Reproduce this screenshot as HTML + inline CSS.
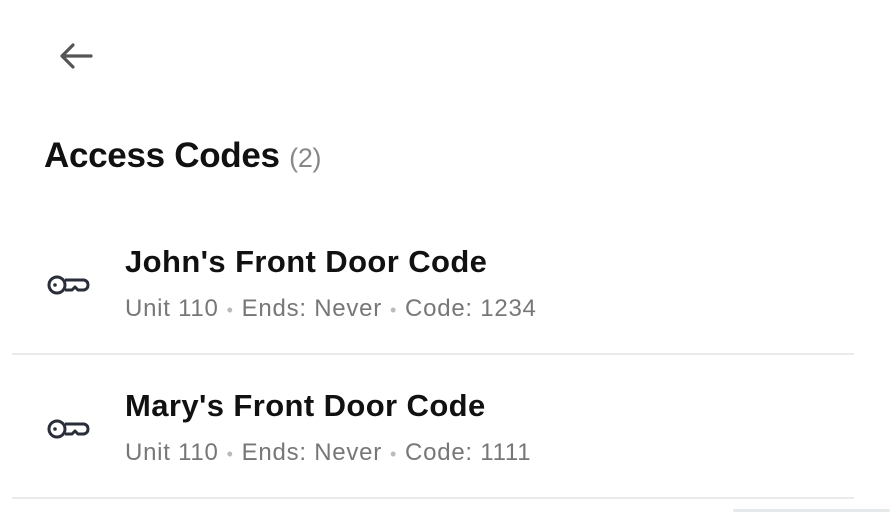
<!DOCTYPE html>
<html><head><style>
body{margin:0;width:890px;height:512px;background:#fff;font-family:"Liberation Sans",sans-serif;position:relative;overflow:hidden}
.a{position:absolute;white-space:nowrap}
.t{font-size:35px;font-weight:bold;color:#111;left:44px;top:136px;letter-spacing:-0.3px}
.t span{font-weight:normal;color:#888;font-size:27px}
.n{font-size:31px;font-weight:bold;color:#111;left:125px;letter-spacing:0.4px}
.s{font-size:24px;color:#777;left:125px;letter-spacing:0.75px}
.s b{color:#bbb;font-weight:normal;margin:0 8px;font-size:18px}
.hr{left:12px;width:842px;height:2px;background:#ebebeb}
</style></head><body>
<svg class="a" style="left:56px;top:38px" width="40" height="36" viewBox="0 0 40 36"><path d="M6 18H35M6 18L17 7M6 18L17 29" stroke="#555" stroke-width="3.2" fill="none" stroke-linecap="round"/></svg>
<div class="a t">Access Codes <span>(2)</span></div>
<svg class="a" style="left:46px;top:272px" width="46" height="26" viewBox="0 0 46 26"><g fill="none" stroke="#2a2d3a" stroke-width="3" stroke-linejoin="round"><circle cx="11" cy="13" r="8"/><path d="M19 8H38Q42 9 42 13Q42 17 38 18H32L29 15L26 18H19"/></g><circle cx="9" cy="13" r="1.8" fill="#2a2d3a"/></svg>
<div class="a n" style="top:244px">John's Front Door Code</div>
<div class="a s" style="top:295px">Unit 110<b>•</b>Ends: Never<b>•</b>Code: 1234</div>
<div class="a hr" style="top:353px"></div>
<svg class="a" style="left:46px;top:416px" width="46" height="26" viewBox="0 0 46 26"><g fill="none" stroke="#2a2d3a" stroke-width="3" stroke-linejoin="round"><circle cx="11" cy="13" r="8"/><path d="M19 8H38Q42 9 42 13Q42 17 38 18H32L29 15L26 18H19"/></g><circle cx="9" cy="13" r="1.8" fill="#2a2d3a"/></svg>
<div class="a n" style="top:388px">Mary's Front Door Code</div>
<div class="a s" style="top:439px">Unit 110<b>•</b>Ends: Never<b>•</b>Code: 1111</div>
<div class="a hr" style="top:497px"></div>
<div class="a" style="left:733px;top:509px;width:157px;height:3px;background:#e6e9ec;border-radius:2px"></div>
</body></html>
